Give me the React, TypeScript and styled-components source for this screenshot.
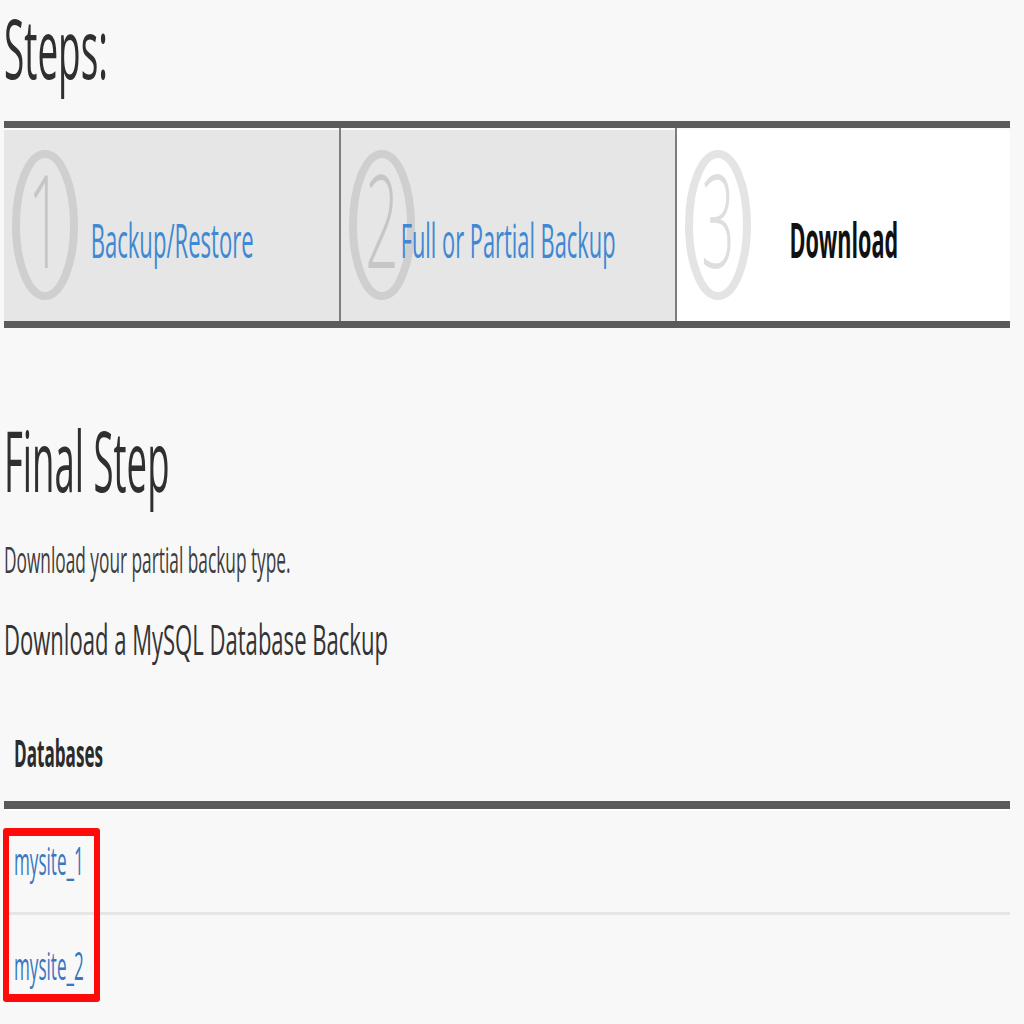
import styled, { createGlobalStyle } from 'styled-components';

const GlobalStyle = createGlobalStyle`
    html, body {
        margin: 0;
        padding: 0;
        background: #f8f8f8;
    }
    body {
        font-family: 'Open Sans', 'Liberation Sans', sans-serif;
        color: #333;
    }
`;

// The capture is stretched tall, so every run of text is squeezed on x.
const Squeezed = styled.span<{ $sx: number; $origin?: string }>`
    display: inline-block;
    white-space: nowrap;
    transform: scaleX(${({ $sx }) => $sx});
    transform-origin: ${({ $origin }) => $origin ?? 'left'} center;
`;

const Page = styled.div`
    padding: 14px 14px 0 4px;
    min-height: 1024px;
    box-sizing: border-box;
`;

const PageTitle = styled.h1`
    margin: 0;
    font-size: 82px;
    line-height: 0.82;
    font-weight: 400;
    color: #2f2f2f;
`;

const StepsBar = styled.div`
    margin-top: 40px;
    display: grid;
    grid-template-columns: repeat(3, minmax(0, 1fr));
    border-top: 7px solid #5b5b5b;
    border-bottom: 7px solid #5b5b5b;
`;

const StepCell = styled.div<{ $current?: boolean }>`
    position: relative;
    height: 193px;
    display: flex;
    align-items: center;
    justify-content: center;
    background: ${({ $current }) => ($current ? '#ffffff' : '#e6e6e6')};
    box-shadow: inset 0 2px 0 #fafafa;

    & + & {
        border-left: 2px solid #7d7d7d;
    }
`;

const StepBadge = styled.svg`
    position: absolute;
    left: 8px;
    top: 50%;
    transform: translateY(-50%);
    width: 66px;
    height: 152px;
    overflow: visible;
`;

const StepLabel = styled.span<{ $current?: boolean }>`
    position: relative;
    flex-shrink: 0;
    margin-top: 30px;
    font-size: 48px;
    line-height: 1;
    font-weight: ${({ $current }) => ($current ? 700 : 400)};
    color: ${({ $current }) => ($current ? '#111' : '#3f88d4')};
`;

const SectionTitle = styled.h2`
    margin: 89px 0 0;
    font-size: 85px;
    line-height: 1;
    font-weight: 400;
    color: #2f2f2f;
`;

const Description = styled.p`
    margin: 40px 0 0;
    font-size: 36px;
    line-height: 1;
    color: #3d3d3d;
`;

const SubTitle = styled.h3`
    margin: 40px 0 0;
    font-size: 42px;
    line-height: 1;
    font-weight: 400;
    color: #333;
`;

const TableWrap = styled.div`
    position: relative;
    margin-top: 73px;
`;

const Table = styled.table`
    width: 100%;
    border-collapse: separate;
    border-spacing: 0;
`;

const HeadCell = styled.th`
    text-align: left;
    padding: 0 10px 30px;
    font-size: 38px;
    line-height: 1;
    font-weight: 700;
    color: #2b2b2b;
    border-bottom: 8px solid #5a5a5a;
    box-shadow: 0 2px 0 #ffffff;
`;

const BodyCell = styled.td<{ $last?: boolean }>`
    padding: ${({ $last }) => ($last ? '31px 10px 33px' : '32px 10px 33px')};
    font-size: 38px;
    line-height: 1;
    border-bottom: ${({ $last }) => ($last ? 'none' : '3px solid #e6e6e6')};
`;

const DbLink = styled.a`
    color: #3977c0;
    text-decoration: none;
`;

const Highlight = styled.div`
    position: absolute;
    left: -1px;
    top: 95px;
    width: 97px;
    height: 174px;
    box-sizing: border-box;
    border-style: solid;
    border-color: #ff0a0a;
    border-width: 8px 6px;
    border-radius: 3px;
    pointer-events: none;
`;

type Step = { num: number; label: string; sx: number; current?: boolean };

const steps: Step[] = [
    { num: 1, label: 'Backup/Restore', sx: 0.46 },
    { num: 2, label: 'Full or Partial Backup', sx: 0.455 },
    { num: 3, label: 'Download', sx: 0.45, current: true },
];

const databases = ['mysite_1', 'mysite_2'];

function StepNumber({ num, current }: { num: number; current?: boolean }) {
    const ring = current ? '#e4e4e4' : '#cfcfcf';
    return (
        <StepBadge viewBox='0 0 66 152'>
            <ellipse
                cx='33'
                cy='76'
                rx='29'
                ry='71'
                fill='none'
                stroke={ring}
                strokeWidth='8'
            />
            <text
                transform='translate(33 119) scale(0.45 1)'
                textAnchor='middle'
                fontFamily="'Open Sans', 'Liberation Sans', sans-serif"
                fontWeight='300'
                fontSize='130'
                fill={current ? '#dedede' : '#c6c6c6'}
            >
                {num}
            </text>
        </StepBadge>
    );
}

export default function App() {
    return (
        <Page>
            <GlobalStyle />
            <PageTitle>
                <Squeezed $sx={0.45}>Steps:</Squeezed>
            </PageTitle>

            <StepsBar>
                {steps.map((step) => (
                    <StepCell key={step.num} $current={step.current}>
                        <StepNumber num={step.num} current={step.current} />
                        <StepLabel $current={step.current}>
                            <Squeezed $sx={step.sx} $origin='center'>
                                {step.label}
                            </Squeezed>
                        </StepLabel>
                    </StepCell>
                ))}
            </StepsBar>

            <SectionTitle>
                <Squeezed $sx={0.43}>Final Step</Squeezed>
            </SectionTitle>
            <Description>
                <Squeezed $sx={0.48}>Download your partial backup type.</Squeezed>
            </Description>
            <SubTitle>
                <Squeezed $sx={0.525}>Download a MySQL Database Backup</Squeezed>
            </SubTitle>

            <TableWrap>
                <Table>
                    <thead>
                        <tr>
                            <HeadCell>
                                <Squeezed $sx={0.45}>Databases</Squeezed>
                            </HeadCell>
                        </tr>
                    </thead>
                    <tbody>
                        {databases.map((db, i) => (
                            <tr key={db}>
                                <BodyCell $last={i === databases.length - 1}>
                                    <DbLink href='#'>
                                        <Squeezed $sx={0.45}>{db}</Squeezed>
                                    </DbLink>
                                </BodyCell>
                            </tr>
                        ))}
                    </tbody>
                </Table>
                <Highlight />
            </TableWrap>
        </Page>
    );
}
